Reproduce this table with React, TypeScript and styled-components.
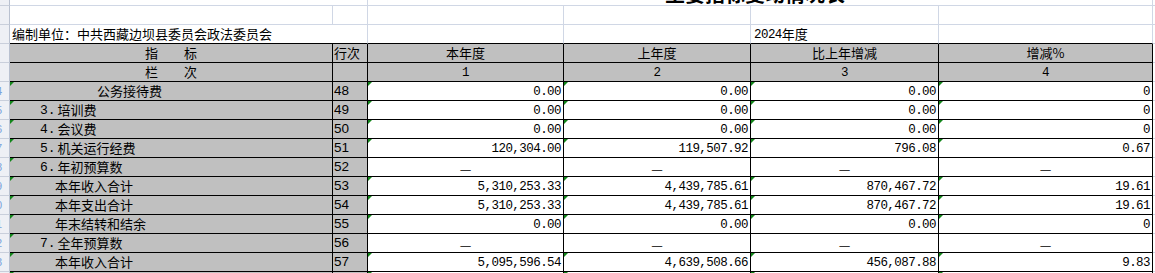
import styled, { createGlobalStyle } from 'styled-components';

const GlobalStyle = createGlobalStyle`
  html, body {
    margin: 0;
    padding: 0;
    background: #ffffff;
  }
  body {
    overflow: hidden;
    font-family: "Noto Sans CJK SC", "Noto Sans", sans-serif;
  }
`;

// column widths include the 1px right border of each cell
const COLS = '10px 323px 35px 196px 187px 188px 214px 1fr';
const GRID = '#d0d7e5';
const MARK = '#12861a';

interface Line {
  label: string;
  indent: number;
  no: number;
  values: string[] | null;
}

const lines: Line[] = [
  { label: '公务接待费', indent: 87, no: 48, values: ['0.00', '0.00', '0.00', '0'] },
  { label: '3.培训费', indent: 30, no: 49, values: ['0.00', '0.00', '0.00', '0'] },
  { label: '4.会议费', indent: 30, no: 50, values: ['0.00', '0.00', '0.00', '0'] },
  { label: '5.机关运行经费', indent: 30, no: 51, values: ['120,304.00', '119,507.92', '796.08', '0.67'] },
  { label: '6.年初预算数', indent: 30, no: 52, values: null },
  { label: '本年收入合计', indent: 45, no: 53, values: ['5,310,253.33', '4,439,785.61', '870,467.72', '19.61'] },
  { label: '本年支出合计', indent: 45, no: 54, values: ['5,310,253.33', '4,439,785.61', '870,467.72', '19.61'] },
  { label: '年末结转和结余', indent: 45, no: 55, values: ['0.00', '0.00', '0.00', '0'] },
  { label: '7.全年预算数', indent: 30, no: 56, values: null },
  { label: '本年收入合计', indent: 45, no: 57, values: ['5,095,596.54', '4,639,508.66', '456,087.88', '9.83'] },
  { label: '本年支出合计', indent: 45, no: 58, values: ['5,095,596.54', '4,639,508.66', '456,087.88', '9.83'] },
];

// "3.培训费" -> numbered prefix drawn in the half-width face
const Label = ({ text }: { text: string }) => {
  const m = text.match(/^(\d+\.)(.*)$/);
  if (!m) return <>{text}</>;
  return (
    <>
      <S.Prefix>{m[1]}</S.Prefix>
      {m[2]}
    </>
  );
};

const App = () => {
  return (
    <>
      <GlobalStyle />
      <S.Sheet>
        <S.Row $h={6}>
          <S.Gutter />
          <S.Cell $tone="sheet" $span={2} />
          <S.Title $span={4}>主要指标变动情况表</S.Title>
          <S.Cell $tone="sheet" />
        </S.Row>

        <S.Row $h={19}>
          <S.Gutter />
          <S.Cell $tone="sheet" />
          <S.Cell $tone="sheet" />
          <S.Cell $tone="sheet" />
          <S.Cell $tone="sheet" />
          <S.Cell $tone="sheet" />
          <S.Cell $tone="sheet" />
          <S.Cell $tone="sheet" />
        </S.Row>

        <S.Row $h={19}>
          <S.Gutter />
          <S.Cell $tone="sheet" $edge $span={2}>
            编制单位：中共西藏边坝县委员会政法委员会
          </S.Cell>
          <S.Cell $tone="sheet" $edge />
          <S.Cell $tone="sheet" $edge />
          <S.Cell $tone="sheet" $edge $indent={3}>
            <S.Num>2024</S.Num>年度
          </S.Cell>
          <S.Cell $tone="sheet" $edge />
          <S.Cell $tone="sheet" />
        </S.Row>

        <S.Row $h={19}>
          <S.Gutter />
          <S.Cell $tone="gray" $align="center">{'指\u3000\u3000标'}</S.Cell>
          <S.Cell $tone="gray" $indent={1}>行次</S.Cell>
          <S.Cell $tone="gray" $align="center">本年度</S.Cell>
          <S.Cell $tone="gray" $align="center">上年度</S.Cell>
          <S.Cell $tone="gray" $align="center">比上年增减</S.Cell>
          <S.Cell $tone="gray" $align="center">增减%</S.Cell>
          <S.Cell $tone="sheet" />
        </S.Row>

        <S.Row $h={19}>
          <S.Gutter />
          <S.Cell $tone="gray" $align="center">{'栏\u3000\u3000次'}</S.Cell>
          <S.Cell $tone="gray" />
          {['1', '2', '3', '4'].map((n) => (
            <S.Cell key={n} $tone="gray" $align="center">
              <S.Num>{n}</S.Num>
            </S.Cell>
          ))}
          <S.Cell $tone="sheet" />
        </S.Row>

        {lines.map((line) => (
          <S.Row key={line.no} $h={19}>
            <S.Gutter>
              <S.RowNo>{line.no - 34}</S.RowNo>
            </S.Gutter>
            <S.Cell $tone="gray" $mark $indent={line.indent}>
              <Label text={line.label} />
            </S.Cell>
            <S.Cell $tone="gray" $indent={1}>
              <S.LineNo>{line.no}</S.LineNo>
            </S.Cell>
            {line.values
              ? line.values.map((v, i) => (
                  <S.Cell key={i} $tone="white" $mark $align="right">
                    <S.Num>{v}</S.Num>
                  </S.Cell>
                ))
              : [0, 1, 2, 3].map((i) => (
                  <S.Cell key={i} $tone="white" $align="center">
                    <S.Dash>—</S.Dash>
                  </S.Cell>
                ))}
            <S.Cell $tone="sheet" />
          </S.Row>
        ))}
      </S.Sheet>
    </>
  );
};

type Tone = 'sheet' | 'gray' | 'white';
type Align = 'left' | 'center' | 'right';

interface CellProps {
  $tone: Tone;
  $align?: Align;
  $indent?: number;
  $mark?: boolean;
  $span?: number;
  $edge?: boolean;
}

const justify = (a?: Align) =>
  a === 'right' ? 'flex-end' : a === 'center' ? 'center' : 'flex-start';

const S = {
  Sheet: styled.div`
    display: flex;
    flex-direction: column;
    width: 1155px;
  `,

  Row: styled.div<{ $h: number }>`
    flex: none;
    display: grid;
    grid-template-columns: ${COLS};
    grid-template-rows: ${({ $h }) => $h}px;
    height: ${({ $h }) => $h}px;
  `,

  Gutter: styled.div`
    box-sizing: border-box;
    min-height: 0;
    overflow: hidden;
    display: flex;
    align-items: center;
    background: #eef0f5;
    border-right: 1px solid #b9c1d0;
    border-bottom: 1px solid #c9cfdb;
  `,

  RowNo: styled.span`
    flex: none;
    margin-left: -10px;
    font-family: "Liberation Sans", sans-serif;
    font-size: 11px;
    line-height: 18px;
    color: #7aa3dc;
  `,

  Cell: styled.div<CellProps>`
    position: relative;
    box-sizing: border-box;
    min-height: 0;
    display: flex;
    align-items: center;
    justify-content: ${({ $align }) => justify($align)};
    grid-column: span ${({ $span }) => $span ?? 1};
    padding: 0 2px 0 ${({ $indent }) => $indent ?? 2}px;
    background: ${({ $tone }) => ($tone === 'gray' ? '#c0c0c0' : '#ffffff')};
    border-right: 1px solid ${({ $tone }) => ($tone === 'sheet' ? GRID : '#000000')};
    border-bottom: 1px solid
      ${({ $tone, $edge }) => ($tone === 'sheet' && !$edge ? GRID : '#000000')};
    font-family: "Noto Sans CJK SC", sans-serif;
    font-size: 13px;
    line-height: 18px;
    color: #000000;
    white-space: pre;

    &::before {
      content: '';
      display: ${({ $mark }) => ($mark ? 'block' : 'none')};
      position: absolute;
      top: 0;
      left: 0;
      width: 0;
      height: 0;
      border-top: 4px solid ${MARK};
      border-right: 4px solid transparent;
    }
  `,

  Title: styled.div<{ $span: number }>`
    box-sizing: border-box;
    min-height: 0;
    display: flex;
    align-items: flex-end;
    justify-content: center;
    grid-column: span ${({ $span }) => $span};
    padding: 0 10px 1px 0;
    border-right: 1px solid ${GRID};
    border-bottom: 1px solid ${GRID};
    font-family: "Noto Sans CJK SC", sans-serif;
    font-size: 20px;
    font-weight: 700;
    line-height: 20px;
    white-space: nowrap;
  `,

  Prefix: styled.span`
    padding-top: 2px;
    margin-right: 2px;
    font-family: "Liberation Mono", monospace;
    font-size: 13px;
    line-height: 18px;
  `,

  Num: styled.span`
    padding-top: 2px;
    font-family: "Liberation Mono", monospace;
    font-size: 12.5px;
    line-height: 18px;
    letter-spacing: -0.55px;
  `,

  LineNo: styled.span`
    font-family: "Liberation Sans", sans-serif;
    font-size: 13.5px;
    line-height: 18px;
  `,

  Dash: styled.span`
    padding-top: 3px;
    font-size: 13px;
    line-height: 18px;
  `,
};

export default App;
